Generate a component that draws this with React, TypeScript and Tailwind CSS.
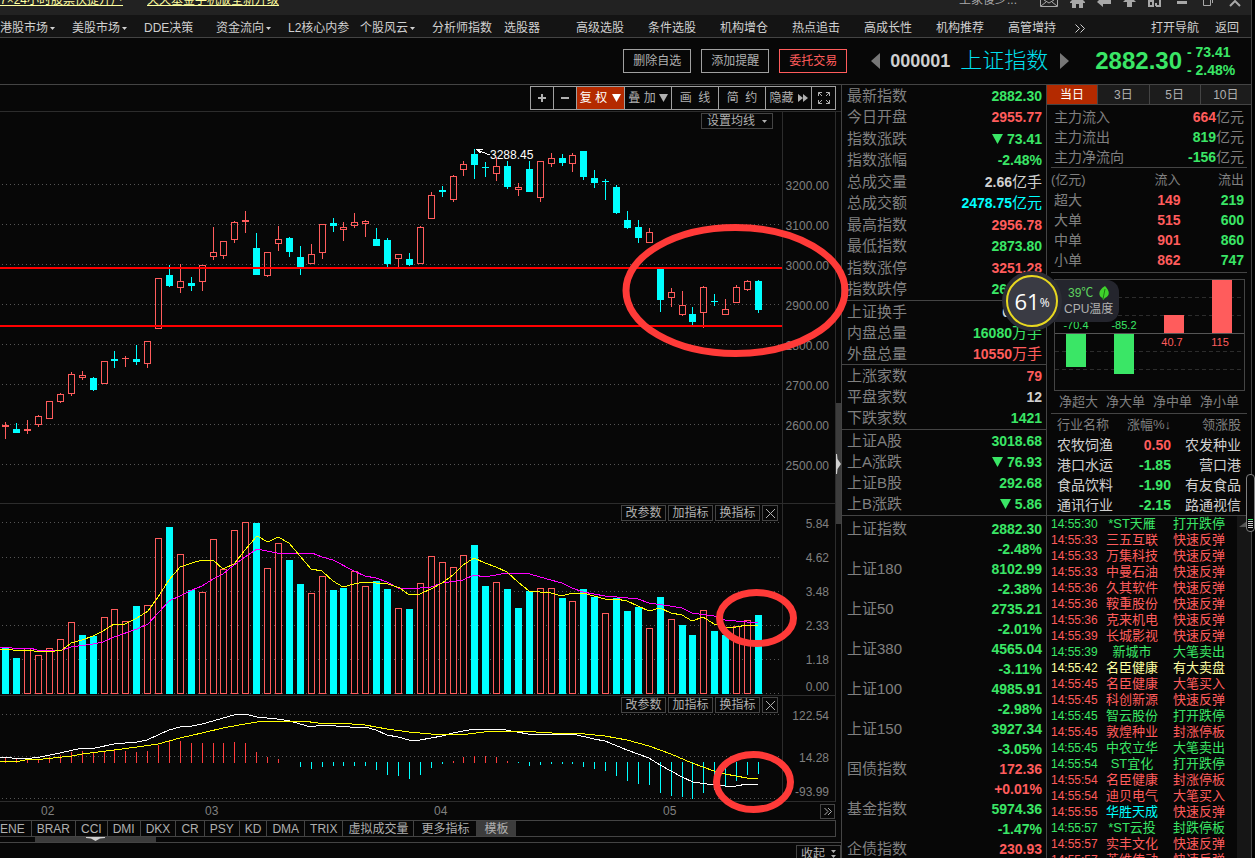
import React from 'react';

type Tone = 'up' | 'down' | 'flat' | 'cyan' | 'warn';

const toneClass: Record<Tone, string> = {
  up: 'text-[#ff5c5c]',
  down: 'text-[#3ae666]',
  flat: 'text-[#d0d0d0]',
  cyan: 'text-[#00ffff]',
  warn: 'text-[#ffffa0]',
};

const menuItems = [
  { label: '港股市场', drop: true },
  { label: '美股市场', drop: true },
  { label: 'DDE决策' },
  { label: '资金流向', drop: true },
  { label: 'L2核心内参' },
  { label: '个股风云', drop: true },
  { label: '分析师指数' },
  { label: '选股器' },
  { label: '高级选股' },
  { label: '条件选股' },
  { label: '机构增仓' },
  { label: '热点追击' },
  { label: '高成长性' },
  { label: '机构推荐' },
  { label: '高管增持' },
];

// [x, body top, body bottom, high, low, rising]
const candles: [number, number, number, number, number, number][] = [
  [5, 425, 427, 422, 439, 1], [16, 429, 433, 423, 433, 0], [27, 429, 431, 420, 434, 1], [38, 416, 425, 415, 427, 1],
  [49, 401, 419, 401, 419, 1], [60, 394, 402, 393, 403, 1], [71, 374, 394, 372, 396, 1], [82, 375, 378, 371, 380, 1],
  [93, 378, 390, 377, 391, 0], [104, 361, 384, 361, 384, 1], [114, 359, 361, 351, 368, 0], [125, 358, 359, 356, 367, 1],
  [136, 359, 362, 345, 365, 0], [147, 341, 364, 341, 368, 1], [158, 278, 329, 278, 329, 1], [169, 275, 286, 265, 287, 0],
  [180, 281, 288, 264, 293, 1], [191, 283, 286, 277, 291, 0], [202, 265, 282, 265, 291, 1], [213, 252, 257, 227, 260, 1],
  [223, 241, 256, 241, 259, 1], [234, 222, 240, 221, 243, 1], [245, 220, 222, 211, 233, 1], [256, 248, 275, 233, 275, 0],
  [267, 252, 276, 252, 277, 1], [278, 239, 244, 226, 251, 1], [289, 238, 252, 237, 257, 0], [300, 257, 268, 246, 275, 0],
  [311, 254, 264, 244, 264, 1], [322, 224, 253, 224, 259, 1], [333, 223, 226, 218, 232, 0], [343, 227, 230, 222, 241, 1],
  [354, 222, 226, 213, 228, 1], [365, 221, 224, 220, 237, 1], [376, 239, 246, 228, 246, 0], [387, 240, 264, 238, 267, 0],
  [398, 254, 259, 254, 267, 1], [409, 259, 265, 253, 266, 0], [420, 227, 264, 226, 264, 1], [431, 195, 219, 192, 219, 1],
  [442, 190, 192, 186, 197, 0], [453, 176, 200, 175, 202, 1], [463, 164, 170, 161, 176, 1], [474, 154, 165, 149, 179, 0],
  [485, 167, 168, 162, 177, 0], [496, 166, 174, 157, 181, 1], [507, 166, 187, 161, 189, 0], [518, 187, 190, 183, 196, 1],
  [529, 169, 192, 161, 192, 0], [540, 161, 198, 161, 202, 1], [551, 158, 164, 153, 167, 1], [562, 158, 163, 154, 166, 0],
  [572, 155, 164, 153, 172, 1], [583, 151, 177, 151, 180, 0], [594, 178, 183, 170, 188, 0], [605, 181, 182, 179, 200, 0],
  [616, 187, 213, 185, 214, 0], [627, 220, 228, 211, 229, 0], [638, 227, 238, 220, 243, 0], [649, 232, 243, 228, 243, 1],
  [660, 268, 300, 268, 312, 0], [671, 292, 298, 288, 307, 1], [682, 305, 315, 291, 316, 1], [692, 314, 322, 307, 325, 0],
  [703, 287, 313, 286, 328, 1], [714, 301, 302, 294, 306, 0], [725, 309, 315, 299, 315, 1], [736, 287, 303, 285, 303, 1],
  [747, 281, 290, 280, 291, 1], [758, 281, 310, 280, 313, 0],
];

const xs = candles.map((c) => c[0]);

// bar top, negative for a falling day
const volumes = [
  -648, -658, 648, 655, 648, 639, 622, -635, -636, 617, 609, 621, -606, 605, 538, -527, 554, -590, 592, 539,
  569, 530, 522, -523, 568, 543, -560, -584, 593, 576, -590, -588, 571, 586, -581, -589, 608, -609, 583, 556,
  562, 567, 555, -545, -586, 582, -589, -608, -591, 588, 588, -598, 601, -589, -597, 613, -598, -611, -607, 628,
  -597, 619, -625, -635, 610, -631, -635, 626, 620, -615,
];

// bar end, above 762 is positive, 0 draws nothing
const macd = [
  757, 758, 759, 759, 757, 755, 752, 751, 753, 751, 750, 751, 752, 751, 745, 741, 741, 743, 743, 743,
  743, 742, 743, 752, 757, 759, 0, 767, 769, 767, 766, 766, 766, 766, 770, 775, 776, 779, 775, 768,
  764, 761, 757, 756, 756, 757, 761, 763, 766, 765, 764, 764, 764, 767, 769, 771, 776, 781, 784, 785,
  793, 796, 797, 799, 793, 790, 787, 781, 775, 774,
];

const ma5 =
  '0,649 11,649 13,650 30,650 38,652 55,651 62,650 71,643 82,640 93,636 103,631 114,624 125,624 137,618 148,611 158,597 169,580 180,567 192,563 202,560 213,560 223,569 234,564 245,550 257,536 268,542 278,537 289,543 300,556 311,569 322,571 333,581 343,587 354,584 365,582 376,583 388,584 400,588 409,595 420,594 431,589 442,583 453,575 463,565 474,558 485,563 496,567 507,572 518,582 529,591 551,593 562,596 572,593 583,593 594,596 605,599 616,599 627,601 638,606 649,611 660,608 671,613 682,615 692,621 703,617 714,624 725,627 736,627 747,625 758,626';
const ma10 =
  '0,647 10,647 12,648 30,648 37,650 62,650 71,647 93,644 103,642 114,637 137,629 148,624 158,613 169,601 180,596 192,590 202,586 213,579 223,574 234,565 245,557 257,549 277,553 312,553 322,557 333,560 354,571 365,576 376,578 387,582 398,588 409,589 420,588 431,587 442,583 463,580 474,575 485,577 507,573 520,573 530,574 547,579 562,583 572,588 583,592 605,596 628,598 638,599 649,603 670,606 682,608 692,613 714,616 725,620 736,621 747,622 758,622';
const dif =
  '0,757 10,757 12,758 32,758 40,757 60,753 82,748 95,748 114,744 125,743 137,742 147,740 158,735 169,730 180,727 192,726 202,724 213,721 223,718 234,715 245,714 257,717 277,719 290,721 300,724 311,727 322,725 350,727 365,727 376,730 387,735 398,737 409,740 420,740 431,738 442,736 453,733 474,729 500,729 517,732 528,734 573,734 594,739 605,741 627,750 649,758 660,765 671,771 682,777 693,782 714,785 725,786 736,786 747,784 758,785';
const dea =
  '0,761 20,761 30,759 43,759 72,756 82,754 114,750 137,747 158,744 180,738 202,733 223,728 245,724 263,721 303,721 318,723 338,723 365,725 387,729 409,732 420,733 442,735 468,734 492,731 520,731 552,733 575,733 605,736 627,740 649,746 671,754 692,763 714,771 725,774 747,778 758,779';

type Quote = { label: string; value: string; unit?: string; tone: Tone; arrow?: boolean };

const quotes1: Quote[] = [
  { label: '最新指数', value: '2882.30', tone: 'down' },
  { label: '今日开盘', value: '2955.77', tone: 'up' },
  { label: '指数涨跌', value: '73.41', tone: 'down', arrow: true },
  { label: '指数涨幅', value: '-2.48%', tone: 'down' },
  { label: '总成交量', value: '2.66', unit: '亿手', tone: 'flat' },
  { label: '总成交额', value: '2478.75', unit: '亿元', tone: 'cyan' },
  { label: '最高指数', value: '2956.78', tone: 'up' },
  { label: '最低指数', value: '2873.80', tone: 'down' },
  { label: '指数涨停', value: '3251.28', tone: 'up' },
  { label: '指数跌停', value: '2660.14', tone: 'down' },
];
const quotes2: Quote[] = [
  { label: '上证换手', value: '0.78%', tone: 'flat' },
  { label: '内盘总量', value: '16080', unit: '万手', tone: 'down' },
  { label: '外盘总量', value: '10550', unit: '万手', tone: 'up' },
];
const quotes3: Quote[] = [
  { label: '上涨家数', value: '79', tone: 'up' },
  { label: '平盘家数', value: '12', tone: 'flat' },
  { label: '下跌家数', value: '1421', tone: 'down' },
];
const quotes4: Quote[] = [
  { label: '上证A股', value: '3018.68', tone: 'down' },
  { label: '上A涨跌', value: '76.93', tone: 'down', arrow: true },
  { label: '上证B股', value: '292.68', tone: 'down' },
  { label: '上B涨跌', value: '5.86', tone: 'down', arrow: true },
];

const indexes: [string, string, string, Tone][] = [
  ['上证指数', '2882.30', '-2.48%', 'down'],
  ['上证180', '8102.99', '-2.38%', 'down'],
  ['上证50', '2735.21', '-2.01%', 'down'],
  ['上证380', '4565.04', '-3.11%', 'down'],
  ['上证100', '4985.91', '-2.98%', 'down'],
  ['上证150', '3927.34', '-3.05%', 'down'],
  ['国债指数', '172.36', '+0.01%', 'up'],
  ['基金指数', '5974.36', '-1.47%', 'down'],
  ['企债指数', '230.93', '+0.02%', 'up'],
];

const sectors: [string, string, Tone, string][] = [
  ['农牧饲渔', '0.50', 'up', '农发种业'],
  ['港口水运', '-1.85', 'down', '营口港'],
  ['食品饮料', '-1.90', 'down', '有友食品'],
  ['通讯行业', '-2.15', 'down', '路通视信'],
];

const alerts: [string, string, string, Tone, Tone?][] = [
  ['14:55:30', '*ST天雁', '打开跌停', 'down'],
  ['14:55:33', '三五互联', '快速反弹', 'up'],
  ['14:55:33', '万集科技', '快速反弹', 'up'],
  ['14:55:33', '中曼石油', '快速反弹', 'up'],
  ['14:55:36', '久其软件', '快速反弹', 'up'],
  ['14:55:36', '鞍重股份', '快速反弹', 'up'],
  ['14:55:36', '克来机电', '快速反弹', 'up'],
  ['14:55:39', '长城影视', '快速反弹', 'up'],
  ['14:55:39', '新城市', '大笔卖出', 'down'],
  ['14:55:42', '名臣健康', '有大卖盘', 'warn'],
  ['14:55:45', '名臣健康', '大笔买入', 'up'],
  ['14:55:45', '科创新源', '快速反弹', 'up'],
  ['14:55:45', '智云股份', '打开跌停', 'down'],
  ['14:55:45', '敦煌种业', '封涨停板', 'up'],
  ['14:55:45', '中农立华', '大笔卖出', 'down'],
  ['14:55:54', 'ST宜化', '打开跌停', 'down'],
  ['14:55:54', '名臣健康', '封涨停板', 'up'],
  ['14:55:54', '迪贝电气', '大笔买入', 'up'],
  ['14:55:55', '华胜天成', '快速反弹', 'up', 'cyan'],
  ['14:55:57', '*ST云投', '封跌停板', 'down'],
  ['14:55:57', '实丰文化', '快速反弹', 'up'],
  ['14:55:57', '英维传动', '快速反弹', 'up'],
];

function Caret() {
  return (
    <svg className="w-[5px] h-[3px] fill-current" viewBox="0 0 5 3">
      <path d="M0 0h5L2.5 3z" />
    </svg>
  );
}

function TitleBar() {
  return (
    <div className="h-[15px] bg-[#222222] overflow-hidden flex items-start justify-between text-[12px] leading-4">
      <div className="flex gap-6 -mt-2 text-[#ffffa0]">
        <a href="#open" className="underline">7×24小时股票快捷开户</a>
        <a href="#fund" className="underline">天天基金手机版全新升级</a>
      </div>
      <div className="flex items-start pr-[10px] text-[#a8a8a8]">
        <span className="-mt-2 mr-[15px] w-[66px] whitespace-nowrap">王家俊少...</span>
        <button aria-label="消息" className="mr-3"><svg className="w-[18px] h-2" viewBox="0 0 18 8" fill="none" stroke="currentColor"><path d="M.5 0v6.500h17V0M1 6l5-4M17 6l-5-4M4 0l5 3 5-3" /></svg></button>
        <button aria-label="主页" className="mr-3"><svg className="w-[15px] h-2 fill-current" viewBox="0 0 15 8"><path d="M0 2L2 0h11l2 2v1h-2v5H9V4H6v4H2V3H0z" /></svg></button>
        <button aria-label="后退" className="mr-3"><svg className="w-[14px] h-2 fill-current" viewBox="0 0 14 8"><path d="M0 2L2 0h12v4H6v3z" /></svg></button>
        <button aria-label="上移" className="mr-3"><svg className="w-[13px] h-2 fill-current" viewBox="0 0 13 8"><path d="M0 2l2-2h9l2 2H9v5H4V2z" /></svg></button>
        <button aria-label="布局" className="mr-4"><svg className="w-[13px] h-2" viewBox="0 0 13 8" fill="none" stroke="currentColor" strokeWidth="2"><path d="M1 0v6h4V1H1M8 6h4V0M8 6V3" /></svg></button>
        <button aria-label="最小化" className="mr-4"><svg className="w-[10px] h-2 fill-current" viewBox="0 0 10 8"><path d="M0 1h10v3H0z" /></svg></button>
        <button aria-label="还原" className="mr-4"><svg className="w-[10px] h-2" viewBox="0 0 10 8" fill="none" stroke="currentColor"><path d="M.5 0v5.500h7V0M9.500 0v3" /></svg></button>
        <button aria-label="关闭"><svg className="w-3 h-2" viewBox="0 0 12 8" fill="none" stroke="currentColor" strokeWidth="2"><path d="M1 6l5-5 5 5" /></svg></button>
      </div>
    </div>
  );
}

function MenuBar() {
  return (
    <nav className="h-[23px] pt-1 bg-[#141414] border-b border-[#444444] flex items-center text-[12px] leading-4 text-[#d0d0d0]">
      {menuItems.map((m) => (
        <button key={m.label} className="w-[72px] shrink-0 flex items-center gap-[2px] whitespace-nowrap">
          {m.label}
          {m.drop && <Caret />}
        </button>
      ))}
      <button className="-ml-[5px]" aria-label="更多">
        <svg className="w-[10px] h-[9px]" viewBox="0 0 10 9" fill="none" stroke="currentColor"><path d="M.5.5l4 4-4 4M5.500.5l4 4-4 4" /></svg>
      </button>
      <div className="ml-auto flex gap-4 pr-3">
        <button>打开导航</button>
        <button>返回</button>
      </div>
    </nav>
  );
}

function Header() {
  return (
    <header className="h-[47px] border-b border-[#444444] flex items-center justify-end">
      <div className="flex gap-[10px] text-[12px] leading-4 text-[#b0b0b0]">
        <button className="w-[68px] h-6 border border-[#a0a0a0]">删除自选</button>
        <button className="w-[68px] h-6 border border-[#a0a0a0]">添加提醒</button>
        <button className="w-[68px] h-6 border border-[#ff5c5c] text-[#ff5c5c]">委托交易</button>
      </div>
      <button aria-label="上一个" className="ml-6">
        <svg className="w-[9px] h-4 fill-[#777777]" viewBox="0 0 9 16"><path d="M9 0v16L0 8z" /></svg>
      </button>
      <span className="ml-[10px] text-[18px] leading-6 font-bold text-[#d0d0d0]">000001</span>
      <h1 className="ml-[10px] text-[22px] leading-6 text-[#00e0f0] font-light">上证指数</h1>
      <button aria-label="下一个" className="ml-3">
        <svg className="w-[9px] h-4 fill-[#777777]" viewBox="0 0 9 16"><path d="M0 0v16l9-8z" /></svg>
      </button>
      <span className="ml-[26px] text-[24px] leading-6 font-bold text-[#3ae666]">2882.30</span>
      <div className="ml-[5px] w-[64px] text-[14px] leading-[18px] font-bold text-[#3ae666]">
        <div>- 73.41</div>
        <div>- 2.48%</div>
      </div>
    </header>
  );
}

function Toolbar() {
  return (
    <div className="h-[27px] pt-px pr-[5px] border-b border-[#2c2c2c] flex justify-end text-[12px] text-[#b0b0b0]">
      <div className="h-6 flex border border-[#a0a0a0] divide-x divide-[#a0a0a0]">
        <button aria-label="放大" className="w-[23px] flex items-center justify-center">
          <svg className="w-2 h-2" viewBox="0 0 8 8" stroke="currentColor" strokeWidth="2"><path d="M0 4h8M4 0v8" /></svg>
        </button>
        <button aria-label="缩小" className="w-[23px] flex items-center justify-center">
          <svg className="w-2 h-2" viewBox="0 0 8 8" stroke="currentColor" strokeWidth="2"><path d="M0 4h8" /></svg>
        </button>
        <button className="w-[48px] flex items-center justify-center gap-[5px] bg-[#b42a00] text-white whitespace-nowrap">
          <span>复 权</span>
          <svg className="w-[9px] h-2 fill-current" viewBox="0 0 9 8"><path d="M0 0h9L4.500 8z" /></svg>
        </button>
        <button className="w-[47px] flex items-center justify-center gap-[3px] whitespace-nowrap">
          <span>叠 加</span>
          <svg className="w-[9px] h-2 fill-current" viewBox="0 0 9 8"><path d="M0 0h9L4.500 8z" /></svg>
        </button>
        <button className="w-[47px] whitespace-pre">画  线</button>
        <button className="w-[47px] whitespace-pre">简  约</button>
        <button className="w-[46px] flex items-center justify-center gap-1">
          隐藏
          <svg className="w-[10px] h-2 fill-current" viewBox="0 0 10 8"><path d="M0 0l5 4-5 4zM5 0l5 4-5 4z" /></svg>
        </button>
        <button aria-label="全屏" className="w-[23px] flex items-center justify-center">
          <svg className="w-3 h-3" viewBox="0 0 12 12" fill="none" stroke="currentColor">
            <path d="M.5 4V.5H4M.5.5L4 4M8 .5h3.500V4M11.500.5L8 4M.5 8v3.500H4M.5 11.500L4 8M8 11.500h3.500V8M11.500 11.500L8 8" />
          </svg>
        </button>
      </div>
    </div>
  );
}

function GridLines({ rows }: { rows: number[] }) {
  return (
    <>
      {rows.map((y) => (
        <path key={y} d={`M2 ${y + 0.5}H782`} stroke="#555555" strokeDasharray="1 3" />
      ))}
    </>
  );
}

function IndicatorButtons() {
  return (
    <div className="absolute top-px right-1 flex gap-[2px] h-4 text-[12px] leading-[14px] text-[#b0b0b0]">
      <button className="w-[45px] border border-[#444444] bg-[#070707]">改参数</button>
      <button className="w-[45px] border border-[#444444] bg-[#070707]">加指标</button>
      <button className="w-[45px] border border-[#444444] bg-[#070707]">换指标</button>
      <button aria-label="关闭指标" className="w-4 border border-[#444444] bg-[#070707] flex items-center justify-center">
        <svg className="w-[9px] h-[9px]" viewBox="0 0 9 9" stroke="currentColor"><path d="M0 0l9 9M9 0L0 9" /></svg>
      </button>
    </div>
  );
}

function PricePanel() {
  return (
    <div className="flex h-[392px] border-b border-[#2c2c2c]">
      <div className="relative flex-1 min-w-0">
        <svg className="block w-full h-full" viewBox="0 112 782 391" preserveAspectRatio="none" shapeRendering="crispEdges">
          <GridLines rows={[184, 224, 264, 304, 344, 384, 424, 464]} />
          {candles.map(([x, top, bottom, high, low, up]) => (
            <g key={x} fill={up ? '#ff5c5c' : '#00ffff'}>
              <rect x={x} y={high} width="1" height={top - high} />
              <rect x={x} y={bottom} width="1" height={low - bottom} />
              {up && bottom - top > 2 ? (
                <rect x={x - 2.5} y={top + 0.5} width="6" height={bottom - top - 1} fill="none" stroke="#ff5c5c" />
              ) : (
                <rect x={x - 3} y={top} width="7" height={bottom - top} />
              )}
            </g>
          ))}
          <path d="M0 268H782M0 326H782" stroke="#ff0000" strokeWidth="2" />
          <path d="M477 150l13 5M476 149h7M477 150l4 3" stroke="#ffffff" fill="none" />
          <text x="490" y="159" fontSize="12" fill="#ffffff">3288.45</text>
        </svg>
        <button className="absolute top-px right-[9px] w-[72px] h-4 border border-[#444444] bg-[#070707] flex items-center justify-center gap-[7px] text-[12px] leading-[14px] text-[#b0b0b0]">
          设置均线
          <Caret />
        </button>
      </div>
      <div className="w-[54px] border-x border-[#2c2c2c] pt-[54px] pr-[6px] text-right text-[12px] leading-10 text-[#808080]">
        {['3200.00', '3100.00', '3000.00', '2900.00', '2800.00', '2700.00', '2600.00', '2500.00'].map((v) => (
          <div key={v}>{v}</div>
        ))}
      </div>
    </div>
  );
}

function VolumePanel() {
  return (
    <div className="flex h-[192px] border-b border-[#2c2c2c]">
      <div className="relative flex-1 min-w-0">
        <svg className="block w-full h-full" viewBox="0 504 782 191" preserveAspectRatio="none" shapeRendering="crispEdges">
          <GridLines rows={[522, 557, 591, 625, 659, 693]} />
          {volumes.map((v, i) =>
            v > 0 ? (
              <rect key={i} x={xs[i] - 2.5} y={v + 0.5} width="6" height={693 - v} fill="#070707" stroke="#ff5c5c" />
            ) : (
              <rect key={i} x={xs[i] - 3} y={-v} width="7" height={694 + v} fill="#00ffff" />
            )
          )}
          <polyline points={ma10} fill="none" stroke="#ff00ff" />
          <polyline points={ma5} fill="none" stroke="#ffff00" />
        </svg>
        <IndicatorButtons />
      </div>
      <div className="w-[54px] border-x border-[#2c2c2c] pt-[3px] pr-[6px] text-right text-[12px] leading-[34px] text-[#808080]">
        {['5.84', '4.62', '3.48', '2.33', '1.18'].map((v) => (
          <div key={v}>{v}</div>
        ))}
        <div className="leading-5">0.00</div>
      </div>
    </div>
  );
}

function MacdPanel() {
  return (
    <div className="flex h-[106px] border-b border-[#2c2c2c]">
      <div className="relative flex-1 min-w-0">
        <svg className="block w-full h-full" viewBox="0 696 782 105" preserveAspectRatio="none" shapeRendering="crispEdges">
          <GridLines rows={[714, 756, 798]} />
          {macd.map((v, i) => {
            if (!v) return null;
            return v < 762 ? (
              <rect key={i} x={xs[i]} y={v} width="1" height={763 - v} fill="#ff3c3c" />
            ) : (
              <rect key={i} x={xs[i]} y={762} width="1" height={v - 762} fill="#00ffff" />
            );
          })}
          <polyline points={dif} fill="none" stroke="#ffffff" />
          <polyline points={dea} fill="none" stroke="#ffff00" />
        </svg>
        <IndicatorButtons />
      </div>
      <div className="w-[54px] border-x border-[#2c2c2c] pr-[6px] text-right text-[12px] text-[#808080]">
        <div className="leading-10">122.54</div>
        <div className="leading-[44px]">14.28</div>
        <div className="leading-6">-93.99</div>
      </div>
    </div>
  );
}

function ChartColumn() {
  return (
    <section className="relative flex-1 min-w-0 flex flex-col">
      <Toolbar />
      <div className="flex">
        <div className="flex-1 min-w-0">
          <PricePanel />
          <VolumePanel />
          <MacdPanel />
          <div className="h-[18px] flex items-center pl-[41px] text-[12px] leading-4 text-[#808080]">
            <span className="w-[164px]">02</span>
            <span className="w-[229px]">03</span>
            <span className="w-[229px]">04</span>
            <span>05</span>
            <button aria-label="展开" className="ml-auto mr-px w-[15px] h-[15px] border border-[#444444] flex items-center justify-center text-[#b0b0b0]">
              <svg className="w-2 h-[7px]" viewBox="0 0 8 7" fill="none" stroke="currentColor"><path d="M.5 0L4 3.500.5 7M4 0l3.500 3.500L4 7" /></svg>
            </button>
          </div>
          <div className="h-[17px] flex border-y border-r border-[#444444] text-[12px] leading-4 text-[#b0b0b0]">
            <button className="pr-[6px] border-r border-[#444444]">ENE</button>
            {['BRAR', 'CCI', 'DMI', 'DKX', 'CR', 'PSY', 'KD', 'DMA', 'TRIX', '虚拟成交量'].map((t) => (
              <button key={t} className="px-[5px] border-r border-[#444444]">{t}</button>
            ))}
            <button className="px-[7px]">更多指标</button>
            <button className="px-2 bg-[#3c3c3c]">模板</button>
          </div>
          <div className="h-[5px] pl-[35px]">
            <div className="w-[121px] h-[5px] bg-[#3c3c3c] flex justify-center">
              <svg className="w-[19px] h-1 fill-[#d0d0d0]" viewBox="0 0 19 4"><path d="M0 0h19v1l-5 .5L9.500 4 5 1.500 0 1z" /></svg>
            </div>
          </div>
        </div>
        <div className="w-[5px] pt-[291px]">
          <div className="h-[121px] bg-[#3c3c3c] flex items-center">
            <svg className="w-[5px] h-5 fill-[#d0d0d0]" viewBox="0 0 5 20"><path d="M0 0h1l.5 5L5 10l-3.500 5L1 20H0z" /></svg>
          </div>
        </div>
      </div>
      <div className="border-t border-[#444444] pt-[2px] flex justify-end">
        <button className="w-[45px] h-[18px] border border-[#444444] flex items-center justify-center gap-[6px] text-[12px] leading-4 text-[#b0b0b0]">
          收起
          <svg className="w-[5px] h-2 fill-current" viewBox="0 0 5 8"><path d="M0 0h5L2.500 3zM0 5h5L2.500 8z" /></svg>
        </button>
      </div>
      <svg className="absolute top-0 right-0 w-[841px] h-[773px] overflow-visible pointer-events-none z-10" viewBox="0 85 841 773" fill="none" stroke="#ff3a38" strokeWidth="7">
        <ellipse cx="735.5" cy="290.5" rx="109.5" ry="63" />
        <ellipse cx="756.5" cy="618" rx="37" ry="25.500" />
        <ellipse cx="753.5" cy="782" rx="37" ry="27.500" />
      </svg>
    </section>
  );
}

function QuoteGroup({ rows, className }: { rows: Quote[]; className: string }) {
  return (
    <dl className={`flex flex-col border-b border-[#444444] pl-[5px] pr-1 ${className}`}>
      {rows.map((q) => (
        <div key={q.label} className="flex-1 flex items-center justify-between">
          <dt className="text-[15px] leading-5 text-[#808080]">{q.label}</dt>
          <dd className={`flex items-center text-[14px] leading-5 font-bold ${toneClass[q.tone]}`}>
            {q.arrow && (
              <svg className="w-[11px] h-[10px] mr-1 fill-current" viewBox="0 0 11 10"><path d="M0 0h11L5.500 10z" /></svg>
            )}
            {q.value}
            {q.unit && <span className="text-[15px] font-normal">{q.unit}</span>}
          </dd>
        </div>
      ))}
    </dl>
  );
}

function QuoteColumn() {
  return (
    <section className="w-[205px] shrink-0 border-l border-[#444444]">
      <QuoteGroup rows={quotes1} className="h-[216px]" />
      <QuoteGroup rows={quotes2} className="h-[64px]" />
      <QuoteGroup rows={quotes3} className="h-[65px]" />
      <QuoteGroup rows={quotes4} className="h-[86px]" />
      <dl className="pt-[3px] pl-[5px] pr-1">
        {indexes.map(([name, value, pct, tone]) => (
          <div key={name} className="flex justify-between leading-5">
            <dt className="text-[15px] text-[#808080]">{name}</dt>
            <dd className={`text-[14px] font-bold text-right ${toneClass[tone]}`}>
              <div>{value}</div>
              <div>{pct}</div>
            </dd>
          </div>
        ))}
      </dl>
    </section>
  );
}

function NetFlowChart() {
  return (
    <svg className="block w-full h-[112px]" viewBox="0 0 191 112" preserveAspectRatio="none" shapeRendering="crispEdges">
      <rect x="0.5" y="0.5" width="190" height="111" fill="none" stroke="#444444" />
      <path d="M1 18.500H190M1 36.500H190M1 72.500H190M1 90.500H190" stroke="#2c2c2c" strokeDasharray="4 3" />
      <path d="M1 54.500H190" stroke="#555555" />
      <rect x="12" y="55" width="20" height="33" fill="#3ae666" />
      <rect x="60" y="55" width="20" height="40" fill="#3ae666" />
      <rect x="110" y="36" width="20" height="18" fill="#ff5c5c" />
      <rect x="158" y="1" width="20" height="53" fill="#ff5c5c" />
      <g fontSize="11" textAnchor="middle">
        <text x="22" y="50" fill="#3ae666">-70.4</text>
        <text x="70" y="50" fill="#3ae666">-85.2</text>
        <text x="118" y="67" fill="#ff5c5c">40.7</text>
        <text x="166" y="67" fill="#ff5c5c">115</text>
      </g>
    </svg>
  );
}

function FlowColumn() {
  const flows = [
    ['超大', '149', '219'],
    ['大单', '515', '600'],
    ['中单', '901', '860'],
    ['小单', '862', '747'],
  ];
  return (
    <section className="w-[205px] shrink-0 border-l border-[#444444] text-[14px] leading-5 text-[#808080]">
      <div className="h-5 flex border-b border-[#444444] divide-x divide-[#444444] text-[12px] leading-5 text-[#b0b0b0]">
        <button className="flex-1 bg-[#b42a00] text-white">当日</button>
        <button className="flex-1 bg-[#1c1c1c]">3日</button>
        <button className="flex-1 bg-[#1c1c1c]">5日</button>
        <button className="flex-1 bg-[#1c1c1c]">10日</button>
      </div>
      <dl className="pt-[2px] pl-[7px] pr-[7px]">
        <div className="flex justify-between"><dt>主力流入</dt><dd><b className="text-[#ff5c5c]">664</b>亿元</dd></div>
        <div className="flex justify-between"><dt>主力流出</dt><dd><b className="text-[#3ae666]">819</b>亿元</dd></div>
        <div className="flex justify-between"><dt>主力净流向</dt><dd><b className="text-[#3ae666]">-156</b>亿元</dd></div>
      </dl>
      <div className="mx-1 pt-[2px] pb-[2px] border-y border-[#444444]">
        <table className="w-full">
          <thead>
            <tr className="text-[13px]">
              <th className="pl-0 text-left font-normal w-[70px]">(亿元)</th>
              <th className="text-right font-normal">流入</th>
              <th className="pr-[3px] text-right font-normal">流出</th>
            </tr>
          </thead>
          <tbody>
            {flows.map(([name, inflow, outflow]) => (
              <tr key={name}>
                <td className="pl-[3px]">{name}</td>
                <td className="text-right font-bold text-[#ff5c5c]">{inflow}</td>
                <td className="pr-[3px] text-right font-bold text-[#3ae666]">{outflow}</td>
              </tr>
            ))}
          </tbody>
        </table>
      </div>
      <div className="pt-[6px] pl-[7px] pr-[6px]">
        <NetFlowChart />
      </div>
      <div className="mx-1 px-2 pt-px h-[23px] flex justify-between border-b border-[#444444] text-[13px]">
        <span>净超大</span>
        <span>净大单</span>
        <span>净中单</span>
        <span>净小单</span>
      </div>
      <div className="pt-px pl-[10px] pr-[10px] border-b border-[#444444]">
        <table className="w-full">
          <thead>
            <tr className="text-[13px]">
              <th className="text-left font-normal">行业名称</th>
              <th className="text-center font-normal">涨幅%↓</th>
              <th className="text-right font-normal">领涨股</th>
            </tr>
          </thead>
          <tbody className="text-[#d0d0d0]">
            {sectors.map(([name, pct, tone, leader]) => (
              <tr key={name}>
                <td>{name}</td>
                <td className={`pr-1 text-right font-bold ${toneClass[tone]}`}>{pct}</td>
                <td className="text-right">{leader}</td>
              </tr>
            ))}
          </tbody>
        </table>
      </div>
      <div className="flex">
        <table className="flex-1 leading-4">
          <tbody>
            {alerts.map(([time, name, action, tone, nameTone], i) => (
              <tr key={i} className={toneClass[tone]}>
                <td className="w-[55px] pl-1 text-[12px]">{time}</td>
                <td className={`w-[60px] text-center text-[13px] ${toneClass[nameTone || tone]}`}>{name}</td>
                <td className="pl-[11px] text-[13px]">{action}</td>
              </tr>
            ))}
          </tbody>
        </table>
        <div className="w-[14px] pt-[5px] bg-[#161616]">
          <svg className="w-2 h-[6px] ml-[2px] fill-[#555555]" viewBox="0 0 8 6"><path d="M8 0v6H0z" /></svg>
        </div>
      </div>
    </section>
  );
}

function CpuWidget() {
  return (
    <div className="absolute top-[186px] right-[132px] z-20 flex items-center">
      <div className="relative w-[60px] h-[60px] rounded-full bg-[#2c2d35] p-1">
        <div className="w-full h-full rounded-full border-2 border-[#e8d820] bg-[#3a3b44] flex items-center justify-center text-white">
          <span className="font-['Open_Sans',sans-serif] text-[22px] leading-6">61</span>
          <span className="font-['Open_Sans',sans-serif] text-[12px] leading-4 pt-1">%</span>
        </div>
      </div>
      <div className="-ml-[10px] w-[67px] h-[42px] rounded-r-xl bg-[#24252d] pl-3 pt-[5px] text-[12px] leading-4">
        <div className="flex items-center gap-[6px] pl-1 text-[#5fd35f]">
          39℃
          <svg className="w-[10px] h-[14px]" viewBox="0 0 10 14"><path d="M6 0c4 4 6 9 0 12l-2 2-.5-2C-1 10-1 4 6 0z" fill="#3fd12c" /><path d="M6 3L4 13" stroke="#1c7a12" fill="none" /></svg>
        </div>
        <div className="text-[#b0b0b0] whitespace-nowrap">CPU温度</div>
      </div>
    </div>
  );
}

export default function App() {
  return (
    <div className="h-screen overflow-hidden bg-black pr-[3px] font-['Liberation_Sans','Noto_Sans_CJK_SC',sans-serif]">
      <div className="h-full bg-[#070707] border-r border-[#444444]">
        <TitleBar />
        <MenuBar />
        <Header />
        <main className="relative flex">
          <ChartColumn />
          <QuoteColumn />
          <FlowColumn />
          <CpuWidget />
          <div className="absolute top-[389px] -right-1 w-[9px] h-[58px] rounded border border-[#808080] bg-[#070707] flex flex-col justify-end gap-px p-px pb-[3px]">
            <div className="h-px bg-[#3ae666]" />
            <div className="h-px bg-[#d0d0d0]" />
            <div className="h-px bg-[#d0d0d0]" />
            <div className="h-px bg-[#d0d0d0]" />
            <div className="h-px bg-[#d0d0d0]" />
          </div>
        </main>
      </div>
    </div>
  );
}
